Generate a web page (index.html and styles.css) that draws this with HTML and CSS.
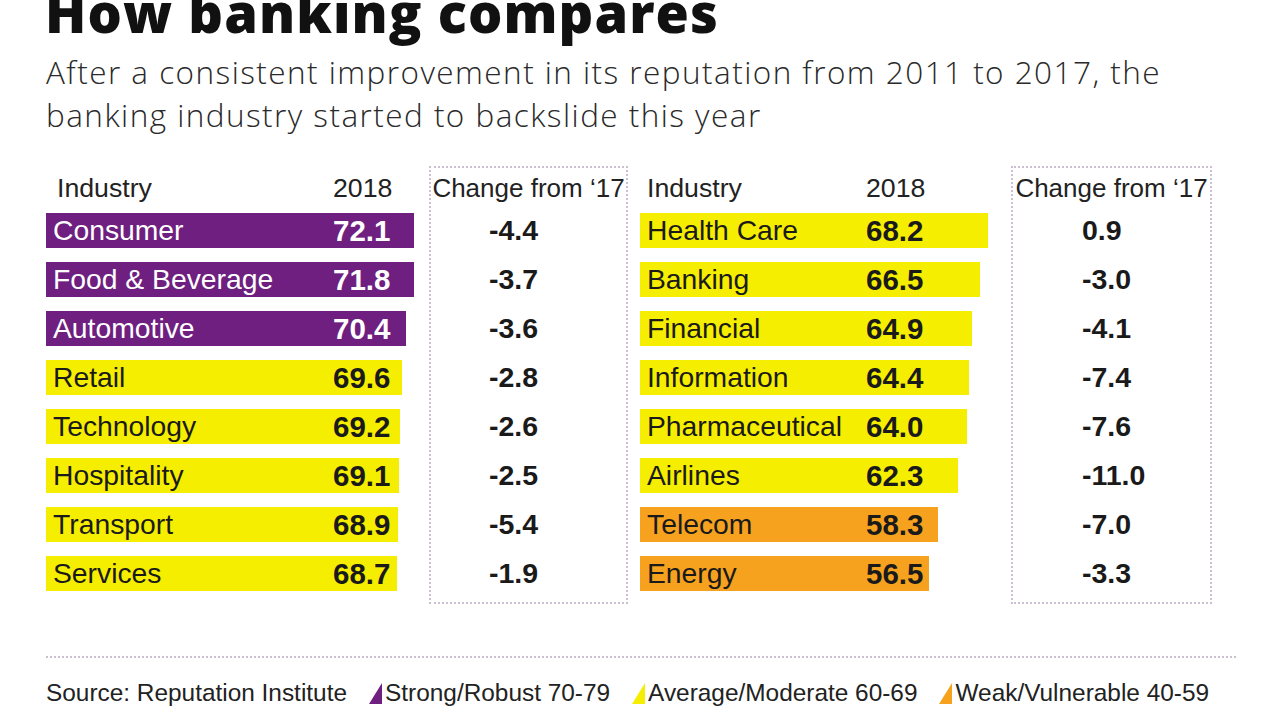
FILE: index.html
```html
<!DOCTYPE html>
<html>
<head>
<meta charset="utf-8">
<link rel="stylesheet" href="styles.css">
</head>
<body>
<div class="page">
  <h1 class="title">How banking compares</h1>
  <p class="subtitle">After a consistent improvement in its reputation from 2011 to 2017, the<br>banking industry started to backslide this year</p>

  <div class="tables">
    <div class="panel panel-left">
      <div class="bars">
        <div class="head"><span class="h-name">Industry</span><span class="h-val">2018</span></div>
        <div class="bar strong" style="width:368px"><span class="name">Consumer</span><span class="val">72.1</span></div>
        <div class="bar strong" style="width:368px"><span class="name">Food &amp; Beverage</span><span class="val">71.8</span></div>
        <div class="bar strong" style="width:360px"><span class="name">Automotive</span><span class="val">70.4</span></div>
        <div class="bar avg" style="width:356px"><span class="name">Retail</span><span class="val">69.6</span></div>
        <div class="bar avg" style="width:354px"><span class="name">Technology</span><span class="val">69.2</span></div>
        <div class="bar avg" style="width:353px"><span class="name">Hospitality</span><span class="val">69.1</span></div>
        <div class="bar avg" style="width:352px"><span class="name">Transport</span><span class="val">68.9</span></div>
        <div class="bar avg" style="width:351px"><span class="name">Services</span><span class="val">68.7</span></div>
      </div>
      <div class="change">
        <div class="c-head">Change from ‘17</div>
        <div class="c-val">-4.4</div>
        <div class="c-val">-3.7</div>
        <div class="c-val">-3.6</div>
        <div class="c-val">-2.8</div>
        <div class="c-val">-2.6</div>
        <div class="c-val">-2.5</div>
        <div class="c-val">-5.4</div>
        <div class="c-val">-1.9</div>
      </div>
    </div>

    <div class="panel panel-right">
      <div class="bars">
        <div class="head"><span class="h-name">Industry</span><span class="h-val">2018</span></div>
        <div class="bar avg" style="width:348px"><span class="name">Health Care</span><span class="val">68.2</span></div>
        <div class="bar avg" style="width:340px"><span class="name">Banking</span><span class="val">66.5</span></div>
        <div class="bar avg" style="width:332px"><span class="name">Financial</span><span class="val">64.9</span></div>
        <div class="bar avg" style="width:329px"><span class="name">Information</span><span class="val">64.4</span></div>
        <div class="bar avg" style="width:327px"><span class="name">Pharmaceutical</span><span class="val">64.0</span></div>
        <div class="bar avg" style="width:318px"><span class="name">Airlines</span><span class="val">62.3</span></div>
        <div class="bar weak" style="width:298px"><span class="name">Telecom</span><span class="val">58.3</span></div>
        <div class="bar weak" style="width:289px"><span class="name">Energy</span><span class="val">56.5</span></div>
      </div>
      <div class="change">
        <div class="c-head">Change from ‘17</div>
        <div class="c-val">0.9</div>
        <div class="c-val">-3.0</div>
        <div class="c-val">-4.1</div>
        <div class="c-val">-7.4</div>
        <div class="c-val">-7.6</div>
        <div class="c-val">-11.0</div>
        <div class="c-val">-7.0</div>
        <div class="c-val">-3.3</div>
      </div>
    </div>
  </div>

  <div class="footer">
    <span class="source">Source: Reputation Institute</span>
    <span class="legend"><svg class="tri" viewBox="0 0 13 21"><polygon points="0,21 13,0 13,21" fill="#6e1f80"/></svg>Strong/Robust 70-79</span>
    <span class="legend"><svg class="tri" viewBox="0 0 13 21"><polygon points="0,21 13,0 13,21" fill="#f6ee00"/></svg>Average/Moderate 60-69</span>
    <span class="legend"><svg class="tri" viewBox="0 0 13 21"><polygon points="0,21 13,0 13,21" fill="#f7a21f"/></svg>Weak/Vulnerable 40-59</span>
  </div>
</div>
</body>
</html>
```

FILE: styles.css
```css
html, body {
  margin: 0;
  padding: 0;
  background: #ffffff;
  width: 1280px;
  height: 720px;
  overflow: hidden;
}

.page {
  padding: 0 44px 0 46px;
  color: #1c1c1c;
}

.title {
  margin: -18px 0 0 -1px;
  font-family: "Open Sans", sans-serif;
  font-weight: 800;
  font-size: 54px;
  line-height: 60px;
  color: #111;
  letter-spacing: 1.1px;
}

.subtitle {
  margin: 8px 0 0 0;
  font-family: "Open Sans", sans-serif;
  font-weight: 300;
  font-size: 31.5px;
  line-height: 43px;
  color: #2a2a2a;
  letter-spacing: 1.45px;
}

.tables {
  display: flex;
  margin-top: 30px;
  font-family: "Liberation Sans", Arial, sans-serif;
}

.panel {
  display: flex;
  align-items: flex-start;
}

.panel-left {
  width: 594px;
}

.panel-left .change {
  margin-left: 15px;
  width: 199px;
}

.panel-right .change {
  margin-left: 23px;
  width: 201px;
}

.panel-left .bars { width: 368px; }
.panel-right .bars { width: 348px; }

.bars {
  display: flex;
  flex-direction: column;
  gap: 14px;
}

.head {
  display: flex;
  height: 22px;
  padding-top: 11px;
  align-items: center;
  font-size: 26.7px;
  color: #222;
}

.h-name {
  padding-left: 11px;
}

.panel-right .h-name { padding-left: 7px; }

.panel-left .h-name { width: 276px; }
.panel-right .h-name { width: 219px; }

.bar {
  display: flex;
  align-items: center;
  height: 35px;
  font-size: 28.3px;
  box-sizing: border-box;
}

.bar .name {
  padding-left: 7px;
  box-sizing: border-box;
}

.panel-left .bar .name { width: 287px; }
.panel-right .bar .name { width: 226px; }

.bar .val {
  font-weight: bold;
  font-size: 29.5px;
}

.strong {
  background: #6e1f80;
  color: #ffffff;
}

.avg {
  background: #f6ee00;
  color: #1a1a1a;
}

.weak {
  background: #f7a21f;
  color: #1a1a1a;
}

.change {
  border: 2px dotted #cdbfd2;
  height: 438px;
  box-sizing: border-box;
  display: flex;
  flex-direction: column;
  gap: 14px;
  padding-top: 4px;
}

.c-head {
  height: 33px;
  line-height: 33px;
  font-size: 26px;
  color: #222;
  white-space: nowrap;
  text-align: center;
  margin-bottom: -6px;
}

.c-val {
  height: 35px;
  line-height: 35px;
  font-size: 28.5px;
  font-weight: bold;
  color: #1a1a1a;
}

.panel-left .c-val { padding-left: 58px; }
.panel-right .c-val { padding-left: 69px; }

.footer {
  margin-top: 52px;
  border-top: 2px dotted #cdbfd2;
  width: 1190px;
  display: flex;
  align-items: center;
  gap: 22px;
  padding-top: 21px;
  font-family: "Liberation Sans", Arial, sans-serif;
  font-size: 24.4px;
  color: #222;
}

.legend {
  display: flex;
  align-items: center;
}

.tri {
  width: 13px;
  height: 21px;
  margin-right: 3px;
}
```
